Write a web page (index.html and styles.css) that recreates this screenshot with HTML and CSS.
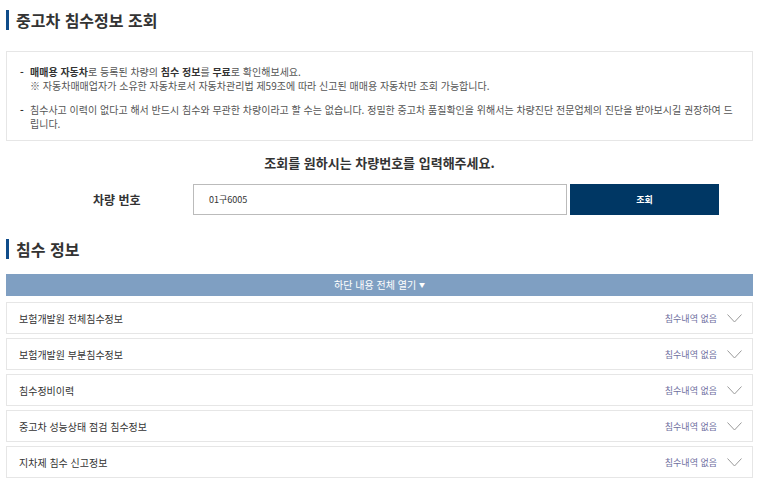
FILE: index.html
```html
<!DOCTYPE html>
<html lang="ko">
<head>
<meta charset="utf-8">
<title>중고차 침수정보 조회</title>
<link rel="stylesheet" href="styles.css">
</head>
<body>
<div class="page">
  <h2 class="title">중고차 침수정보 조회</h2>
  <div class="notice">
    <p class="item"><span class="dash">-</span><span><b>매매용 자동차</b>로 등록된 차량의 <b>침수 정보</b>를 <b>무료</b>로 확인해보세요.<br>※ 자동차매매업자가 소유한 자동차로서 자동차관리법 제59조에 따라 신고된 매매용 자동차만 조회 가능합니다.</span></p>
    <p class="item"><span class="dash">-</span><span>침수사고 이력이 없다고 해서 반드시 침수와 무관한 차량이라고 할 수는 없습니다. 정밀한 중고차 품질확인을 위해서는 차량진단 전문업체의 진단을 받아보시길 권장하여 드립니다.</span></p>
  </div>
  <p class="prompt">조회를 원하시는 차량번호를 입력해주세요.</p>
  <div class="search">
    <label class="label">차량 번호</label>
    <div class="input">01구6005</div>
    <button class="btn">조회</button>
  </div>
  <h2 class="title title2">침수 정보</h2>
  <div class="openall">하단 내용 전체 열기 <span class="tri">▼</span></div>
  <div class="list">
    <div class="row"><span class="name">보험개발원 전체침수정보</span><span class="status">침수내역 없음</span><svg class="chev" width="15" height="9" viewBox="0 0 15 9"><path d="M0.5 0.5 L7.5 8 L14.5 0.5" fill="none" stroke="#9a9a9a" stroke-width="1"/></svg></div>
    <div class="row"><span class="name">보험개발원 부분침수정보</span><span class="status">침수내역 없음</span><svg class="chev" width="15" height="9" viewBox="0 0 15 9"><path d="M0.5 0.5 L7.5 8 L14.5 0.5" fill="none" stroke="#9a9a9a" stroke-width="1"/></svg></div>
    <div class="row"><span class="name">침수정비이력</span><span class="status">침수내역 없음</span><svg class="chev" width="15" height="9" viewBox="0 0 15 9"><path d="M0.5 0.5 L7.5 8 L14.5 0.5" fill="none" stroke="#9a9a9a" stroke-width="1"/></svg></div>
    <div class="row"><span class="name">중고차 성능상태 점검 침수정보</span><span class="status">침수내역 없음</span><svg class="chev" width="15" height="9" viewBox="0 0 15 9"><path d="M0.5 0.5 L7.5 8 L14.5 0.5" fill="none" stroke="#9a9a9a" stroke-width="1"/></svg></div>
    <div class="row"><span class="name">지차제 침수 신고정보</span><span class="status">침수내역 없음</span><svg class="chev" width="15" height="9" viewBox="0 0 15 9"><path d="M0.5 0.5 L7.5 8 L14.5 0.5" fill="none" stroke="#9a9a9a" stroke-width="1"/></svg></div>
  </div>
</div>
</body>
</html>
```

FILE: styles.css
```css
html, body {
  margin: 0;
  padding: 0;
  background: #fff;
}
body {
  font-family: "Noto Sans CJK KR", "Noto Sans", sans-serif;
  color: #333;
}
.page {
  width: 747px;
  margin-left: 6px;
  padding-top: 10px;
}
.title {
  margin: 0;
  border-left: 3px solid #0f4c8a;
  padding-left: 7px;
  font-size: 16px;
  line-height: 20px;
  height: 20px;
  font-weight: 700;
  color: #333;
}
.notice {
  margin-top: 21px;
  border: 1px solid #e6e6e6;
  height: 90px;
  box-sizing: border-box;
  padding: 13px 12px 0 13px;
  font-size: 10px;
  line-height: 14px;
  color: #555;
  word-break: break-all;
}
.notice b { color: #333; font-weight: 700; }
.item {
  margin: 0 0 10px 0;
  display: flex;
}
.dash {
  width: 10px;
  flex: none;
  font-weight: 700;
  color: #333;
}
.prompt {
  margin: 13px 0 0 0;
  text-align: center;
  font-size: 13px;
  line-height: 18px;
  font-weight: 700;
  color: #333;
}
.search {
  display: flex;
  align-items: center;
  margin-top: 12px;
  height: 31px;
}
.label {
  width: 187px;
  box-sizing: border-box;
  padding-left: 87px;
  font-size: 12px;
  font-weight: 700;
  color: #333;
}
.input {
  width: 374px;
  height: 31px;
  box-sizing: border-box;
  border: 1px solid #bbb;
  font-size: 9px;
  line-height: 29px;
  padding-left: 15px;
  color: #333;
}
.btn {
  margin-left: 3px;
  width: 149px;
  height: 31px;
  border: 0;
  background: #003764;
  color: #fff;
  font-family: inherit;
  font-size: 9px;
  font-weight: 700;
}
.title2 {
  margin-top: 24px;
}
.openall {
  margin-top: 15px;
  height: 22px;
  background: #7f9fc2;
  color: #fff;
  text-align: center;
  font-size: 10px;
  line-height: 22px;
}
.tri { font-size: 6px; vertical-align: 2px; }
.list {
  margin-top: 6px;
  display: flex;
  flex-direction: column;
  gap: 4px;
}
.row {
  display: flex;
  align-items: center;
  height: 32px;
  box-sizing: border-box;
  border: 1px solid #e6e6e6;
  padding-left: 12px;
  padding-right: 10px;
}
.name {
  flex: 1;
  font-size: 10px;
  color: #333;
}
.status {
  font-size: 9px;
  color: #6e6e9e;
  margin-right: 10px;
}
.chev { flex: none; }
```
